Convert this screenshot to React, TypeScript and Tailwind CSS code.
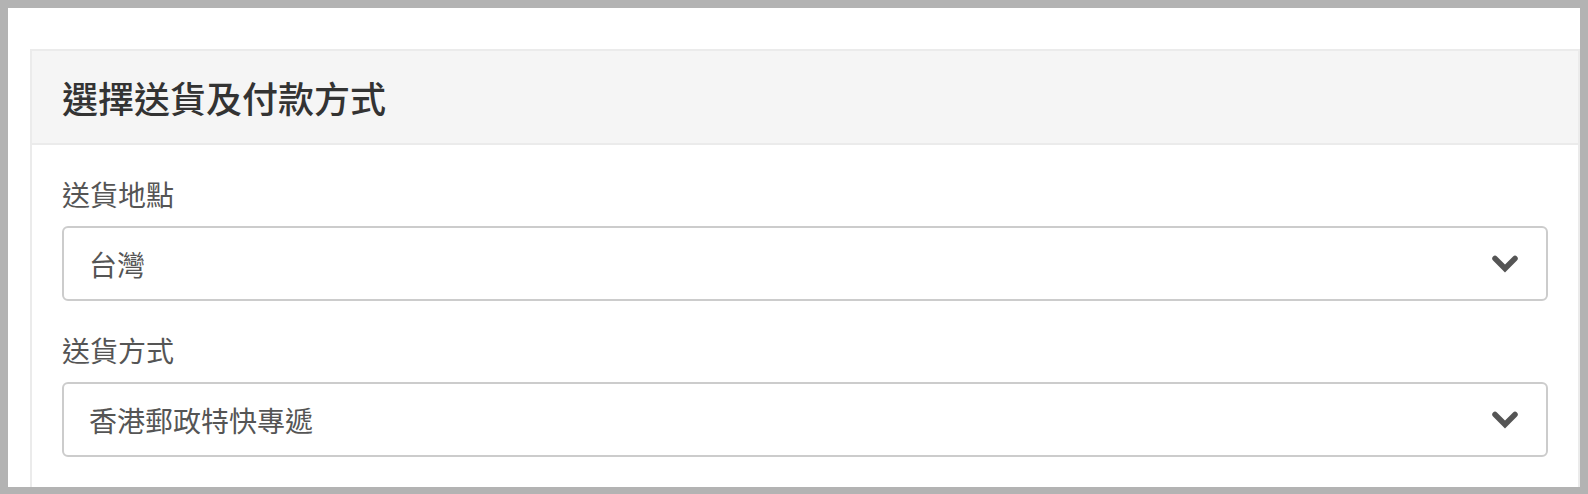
import React from "react";

const font = { fontFamily: '"Noto Sans CJK TC", "Noto Sans CJK SC", "Noto Sans", sans-serif' };

function Chevron() {
  return (
    <svg width="26" height="18" viewBox="0 0 26 18" className="shrink-0">
      <polyline points="3,3.5 13,13.5 23,3.5" fill="none" stroke="#555555" strokeWidth="5.5" strokeLinecap="round" strokeLinejoin="miter" />
    </svg>
  );
}

function Field({ label, value }: { label: string; value: string }) {
  return (
    <div className="mb-[28px]">
      <div className="text-[28px] leading-[42px] text-[#555555] mb-[11px]">{label}</div>
      <div className="h-[75px] border-2 border-[#cccccc] rounded-[6px] bg-white flex items-center justify-between pl-[25px] pr-[28px]">
        <span className="text-[28px] leading-[42px] text-[#555555]">{value}</span>
        <Chevron />
      </div>
    </div>
  );
}

export default function App() {
  return (
    <div className="w-[1588px] h-[494px] bg-[#b3b3b3] pt-[8px] pl-[8px] pr-[8px] pb-[7px]" style={font}>
      <div className="w-full h-full bg-white pt-[41px] pl-[22px] overflow-hidden">
        <div className="border-2 border-b-0 border-[#ebebeb] h-[460px]">
          <div className="h-[92px] bg-[#f5f5f5] border-b-2 border-[#ebebeb] box-content flex items-center pl-[30px]">
            <h1 className="text-[36px] font-medium text-[#333333] leading-none">選擇送貨及付款方式</h1>
          </div>
          <div className="pt-[28px] px-[30px]">
            <Field label="送貨地點" value="台灣" />
            <Field label="送貨方式" value="香港郵政特快專遞" />
          </div>
        </div>
      </div>
    </div>
  );
}
